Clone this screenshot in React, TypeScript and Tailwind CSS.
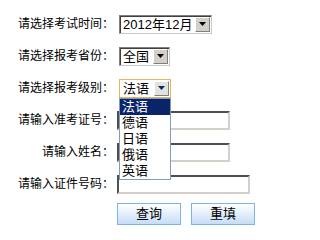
import React from "react";

const font = { fontFamily: '"Liberation Sans", "Noto Sans CJK SC", sans-serif' };

function Arrow({ color }: { color: string }) {
  return (
    <svg width="7" height="4" viewBox="0 0 7 4">
      <polygon points="0,0 7,0 3.5,4" fill={color} />
    </svg>
  );
}

function Sel({ text, focused, wide }: { text: string; focused?: boolean; wide?: boolean }) {
  return (
    <div
      className={
        focused
          ? "flex h-[19px] w-[52px] border border-[#e2b65a] bg-white p-[1px]"
          : wide
          ? "flex h-[19px] w-[93px] border border-t-[#808080] border-l-[#808080] border-b-[#c8c8c8] border-r-[#c8c8c8] bg-white p-[1px] shadow-[inset_1px_1px_0_#404040]"
          : "flex h-[19px] w-[51px] border border-t-[#808080] border-l-[#808080] border-b-[#c8c8c8] border-r-[#c8c8c8] bg-white p-[1px] shadow-[inset_1px_1px_0_#404040]"
      }
    >
      <div className="flex-1 overflow-hidden whitespace-nowrap pl-[2px] text-[13px] leading-[15px] text-black">{text}</div>
      <div
        className={
          focused
            ? "flex w-[15px] items-center justify-center border border-t-[#ffffff] border-l-[#ffffff] border-b-[#808080] border-r-[#808080] bg-[#e4e2dc]"
            : "flex w-[15px] items-center justify-center border border-t-[#ffffff] border-l-[#ffffff] border-b-[#808080] border-r-[#808080] bg-[#d4d0c8]"
        }
      >
        <Arrow color={focused ? "#0a246a" : "#000000"} />
      </div>
    </div>
  );
}

function Input({ wide }: { wide?: boolean }) {
  return (
    <div
      className={
        wide
          ? "h-[19px] w-[133px] border-2 border-t-[#505050] border-l-[#505050] border-b-[#d4d0c8] border-r-[#d4d0c8] bg-white"
          : "h-[19px] w-[113px] border-2 border-t-[#505050] border-l-[#505050] border-b-[#d4d0c8] border-r-[#d4d0c8] bg-white"
      }
    />
  );
}

function Row({ label, children, input }: { label: string; children: React.ReactNode; input?: boolean }) {
  return (
    <div className="flex h-[32px] items-center">
      <div className="w-[114px] text-right text-[12px] leading-[14px] text-black">{label}</div>
      <div className={input ? "ml-[3px]" : "ml-[5px]"}>{children}</div>
    </div>
  );
}

export default function App() {
  const opts = ["法语", "德语", "日语", "俄语", "英语"];
  return (
    <div className="relative h-[238px] w-[283px] overflow-hidden bg-white pt-[8px]" style={font}>
      <Row label="请选择考试时间：">
        <Sel text="2012年12月" wide />
      </Row>
      <Row label="请选择报考省份：">
        <Sel text="全国" />
      </Row>
      <Row label="请选择报考级别：">
        <div className="relative">
          <Sel text="法语" focused />
          <div className="absolute left-0 top-[19px] z-10 w-[52px] border border-[#7f9db9] bg-white">
            {opts.map((o, i) => (
              <div
                key={o}
                className={
                  i === 0
                    ? "h-[16px] bg-[#0a246a] pl-[2px] text-[13px] leading-[16px] text-white"
                    : "h-[16px] pl-[2px] text-[13px] leading-[16px] text-black"
                }
              >
                {o}
              </div>
            ))}
          </div>
        </div>
      </Row>
      <Row label="请输入准考证号：" input>
        <Input />
      </Row>
      <Row label="请输入姓名：" input>
        <Input />
      </Row>
      <Row label="请输入证件号码：" input>
        <Input wide />
      </Row>
      <div className="ml-[117px] mt-[3px] flex gap-[10px]">
        <button className="h-[22px] w-[64px] border border-[#7eb4ea] bg-gradient-to-b from-[#ffffff] to-[#c6ddf5] text-[13px] leading-[20px] text-black">
          查询
        </button>
        <button className="h-[22px] w-[64px] border border-[#7eb4ea] bg-gradient-to-b from-[#ffffff] to-[#c6ddf5] text-[13px] leading-[20px] text-black">
          重填
        </button>
      </div>
    </div>
  );
}
